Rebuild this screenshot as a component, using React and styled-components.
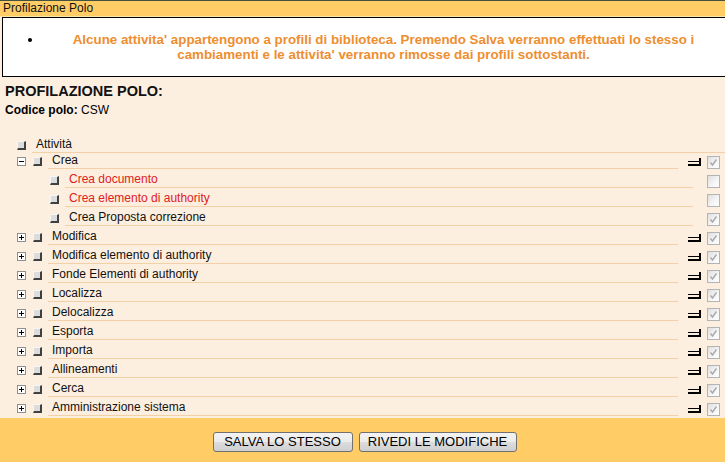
import React from 'react';
import styled, { createGlobalStyle } from 'styled-components';

const Global = createGlobalStyle`
  html, body { margin: 0; padding: 0; }
  body {
    background: #FDEFE0;
    font-family: "Liberation Sans", Arial, sans-serif;
    overflow: hidden;
  }
`;

const Page = styled.div`
  width: 725px;
  height: 462px;
  display: flex;
  flex-direction: column;
  overflow: hidden;
  background: #FDEFE0;
  color: #000;
`;

const TitleBar = styled.div`
  height: 15px;
  border-top: 1px solid #44513f;
  border-bottom: 1px solid #fbe3b4;
  background: #FFCC66;
  font-size: 12px;
  line-height: 15px;
  padding-left: 3px;
  color: #111;
  flex-shrink: 0;
`;

const Notice = styled.div`
  margin-left: 2px;
  width: 727px;
  height: 60px;
  box-sizing: border-box;
  flex-shrink: 0;
  background: #fff;
  border: 1px solid #000;
`;

const NoticeList = styled.ul`
  margin: 14px 0 0;
  padding: 0 4px 0 40px;
  list-style: disc outside;
`;

const NoticeItem = styled.li`
  color: #EE8E2F;
  font-weight: bold;
  font-size: 13.35px;
  line-height: 15px;
  text-align: center;
  &::marker { color: #000; }
`;

const Heading = styled.h1`
  margin: 5px 0 0 5px;
  font-size: 14.5px;
  line-height: 18px;
  font-weight: bold;
  color: #111;
`;

const Code = styled.div`
  margin: 3px 0 0 5px;
  font-size: 12px;
  line-height: 15px;
  b { font-weight: bold; }
`;

const Tree = styled.div`
  margin-top: 18px;
  display: flex;
  flex-direction: column;
  flex-shrink: 0;
`;

const Row = styled.div`
  height: ${p => (p.$root ? 16 : 19)}px;
  display: flex;
  align-items: flex-start;
  padding-left: ${p => (p.$child ? 50 : 17)}px;
  padding-right: ${p => (p.$root ? 0 : 5)}px;
`;

const Expander = styled.svg`
  flex-shrink: 0;
  margin-top: 5px;
  margin-right: 7px;
`;

const NodeBox = styled.span`
  flex-shrink: 0;
  box-sizing: border-box;
  width: 9px;
  height: 9px;
  margin-top: 5px;
  background: #dcdcdc;
  border-top: 1px solid #f6f6f6;
  border-left: 1px solid #f6f6f6;
  border-right: 2px solid #404040;
  border-bottom: 2px solid #404040;
`;

const Label = styled.div`
  flex: 1;
  height: 15px;
  line-height: 15px;
  margin-top: 1px;
  margin-left: 6px;
  margin-right: ${p => p.$gap}px;
  padding-left: 4px;
  border-bottom: 1px solid #F3D0A8;
  font-size: 12px;
  color: ${p => (p.$red ? '#E02020' : '#111')};
  white-space: nowrap;
`;

const Corner = styled.svg`
  flex-shrink: 0;
  margin-top: 6px;
  margin-right: 6px;
`;

const Check = styled.span`
  flex-shrink: 0;
  box-sizing: border-box;
  width: 13px;
  height: 13px;
  margin-top: 4px;
  border: 1px solid #b4b4b4;
  background: linear-gradient(135deg, #dedede 0%, #f6f6f6 60%, #fdfdfd 100%);
  display: flex;
  align-items: center;
  justify-content: center;
`;

const Footer = styled.div`
  flex: 1;
  background: #FFCC66;
  display: flex;
  justify-content: center;
  align-items: flex-start;
  gap: 6px;
  padding: 14px 0 0 4px;
`;

const Button = styled.button`
  width: ${p => p.$w}px;
  height: 20px;
  padding: 0;
  text-align: center;
  font-family: "Liberation Sans", Arial, sans-serif;
  font-size: 13px;
  line-height: 18px;
  color: #000;
  border: 1px solid #707070;
  border-radius: 3px;
  background: linear-gradient(#f3f3f3 0%, #ebebeb 50%, #dddddd 50%, #cfcfcf 100%);
  cursor: pointer;
`;

const ExpandIcon = ({ open }) => (
  <Expander width="9" height="9" viewBox="0 0 9 9" shapeRendering="crispEdges">
    <rect x="0.5" y="0.5" width="8" height="8" fill="#fff" stroke="#8f8f8f" />
    <rect x="2" y="4" width="5" height="1" fill="#000" />
    {!open && <rect x="4" y="2" width="1" height="5" fill="#000" />}
  </Expander>
);

const CornerIcon = () => (
  <Corner width="13" height="9" viewBox="0 0 13 9" shapeRendering="crispEdges">
    <rect x="0" y="3" width="11" height="1" fill="#000" />
    <rect x="11" y="0" width="2" height="8" fill="#000" />
    <rect x="0" y="6" width="13" height="2" fill="#000" />
  </Corner>
);

const DisabledCheck = ({ checked }) => (
  <Check>
    {checked && (
      <svg width="11" height="11" viewBox="0 0 11 11">
        <path d="M2.5 5.5 L4.5 8 L8.5 2.5" fill="none" stroke="#a9a9a9" strokeWidth="1.4" />
      </svg>
    )}
  </Check>
);

const items = [
  { label: 'Crea', open: true, checked: true },
  { label: 'Crea documento', child: true, red: true, checked: false },
  { label: 'Crea elemento di authority', child: true, red: true, checked: false },
  { label: 'Crea Proposta correzione', child: true, checked: true },
  { label: 'Modifica', checked: true },
  { label: 'Modifica elemento di authority', checked: true },
  { label: 'Fonde Elementi di authority', checked: true },
  { label: 'Localizza', checked: true },
  { label: 'Delocalizza', checked: true },
  { label: 'Esporta', checked: true },
  { label: 'Importa', checked: true },
  { label: 'Allineamenti', checked: true },
  { label: 'Cerca', checked: true },
  { label: 'Amministrazione sistema', checked: true },
];

export default function App() {
  return (
    <>
      <Global />
      <Page>
        <TitleBar>Profilazione Polo</TitleBar>
        <Notice>
          <NoticeList>
            <NoticeItem>
              Alcune attivita' appartengono a profili di biblioteca. Premendo Salva verranno effettuati lo stesso i
              cambiamenti e le attivita' verranno rimosse dai profili sottostanti.
            </NoticeItem>
          </NoticeList>
        </Notice>
        <Heading>PROFILAZIONE POLO:</Heading>
        <Code>
          <b>Codice polo:</b> CSW
        </Code>
        <Tree>
          <Row $root>
            <NodeBox />
            <Label $gap={0}>Attività</Label>
          </Row>
          {items.map(it => (
            <Row key={it.label} $child={it.child}>
              {!it.child && <ExpandIcon open={it.open} />}
              <NodeBox />
              <Label $gap={it.child ? 14 : 10} $red={it.red}>{it.label}</Label>
              {!it.child && <CornerIcon />}
              <DisabledCheck checked={it.checked} />
            </Row>
          ))}
        </Tree>
        <Footer>
          <Button $w={140}>SALVA LO STESSO</Button>
          <Button $w={158}>RIVEDI LE MODIFICHE</Button>
        </Footer>
      </Page>
    </>
  );
}
